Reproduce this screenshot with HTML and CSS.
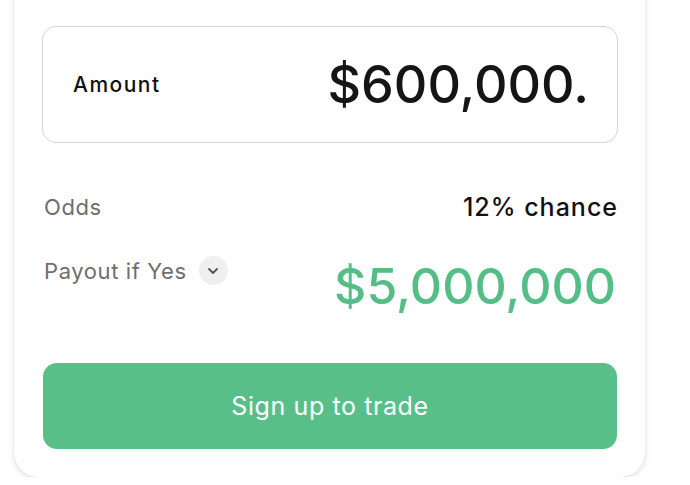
FILE: index.html
```html
<!DOCTYPE html>
<html>
<head>
<meta charset="utf-8">
<link rel="stylesheet" href="styles.css">
</head>
<body>
<div class="card">
  <div class="amount-box">
    <span class="amount-label">Amount</span>
    <span class="amount-value">$600,000.</span>
  </div>
  <div class="row odds">
    <span class="label">Odds</span>
    <span class="odds-value">12% chance</span>
  </div>
  <div class="row payout">
    <span class="label payout-label">Payout if Yes
      <span class="chev"><svg width="14" height="14" viewBox="0 0 14 14"><path d="M3 5 L7 9 L11 5" fill="none" stroke="#555" stroke-width="1.8" stroke-linecap="round" stroke-linejoin="round"/></svg></span>
    </span>
    <span class="payout-value">$5,000,000</span>
  </div>
  <button class="cta">Sign up to trade</button>
</div>
</body>
</html>
```
FILE: styles.css
```css
html, body {
  margin: 0;
  padding: 0;
  background: #ffffff;
  font-family: Inter, "Noto Sans", sans-serif;
}
.card {
  box-sizing: border-box;
  width: 631px;
  margin: -30px 0 0 14px;
  padding: 56px 27px 28px 28px;
  background: #fff;
  border-radius: 0 0 24px 24px;
  box-shadow: 0 2px 6px rgba(0,0,0,0.12), 0 0 1px rgba(0,0,0,0.14);
}
.amount-box {
  box-sizing: border-box;
  height: 117px;
  border: 1.5px solid #d5d5d5;
  border-radius: 14px;
  display: flex;
  align-items: center;
  justify-content: space-between;
  padding: 0 28px 0 30px;
}
.amount-label {
  font-size: 21px;
  font-weight: 500;
  color: #111;
  letter-spacing: 1.5px;
}
.amount-value {
  font-size: 52px;
  font-weight: 500;
  color: #151515;
}
.row {
  display: flex;
  justify-content: space-between;
  padding-left: 2px;
}
.odds {
  margin-top: 49px;
  align-items: center;
}
.label {
  font-size: 22px;
  color: #6e6e6e;
  letter-spacing: 0.6px;
}
.odds-value {
  font-size: 25px;
  font-weight: 500;
  color: #111;
  letter-spacing: 1px;
}
.payout {
  margin-top: 34px;
  align-items: flex-start;
}
.payout-label {
  display: flex;
  align-items: center;
  gap: 12px;
}
.chev {
  width: 29px;
  height: 29px;
  border-radius: 50%;
  background: #efefef;
  display: flex;
  align-items: center;
  justify-content: center;
}
.payout-value {
  font-size: 50px;
  font-weight: 500;
  color: #55be87;
  line-height: 1;
  margin-top: 5px;
  padding-right: 2px;
}
.cta {
  display: block;
  width: 574px;
  height: 86px;
  margin: 52px 0 0 1px;
  border: none;
  border-radius: 14px;
  background: #58bf89;
  color: #fff;
  font-family: Inter, "Noto Sans", sans-serif;
  font-size: 25px;
  font-weight: 400;
  letter-spacing: 0.6px;
}
```
